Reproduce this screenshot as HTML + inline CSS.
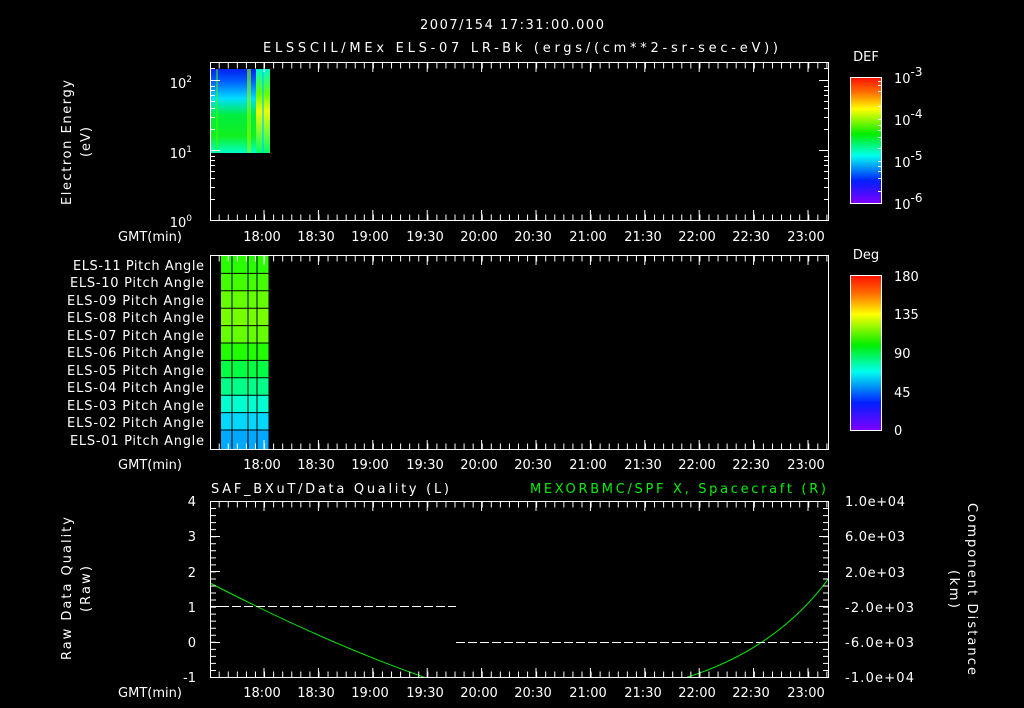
<!DOCTYPE html>
<html><head><meta charset="utf-8"><style>
html,body{margin:0;padding:0;background:#000;width:1024px;height:708px;overflow:hidden}
svg{display:block}
text{font-family:"DejaVu Sans","Liberation Sans",sans-serif;fill:#fff;font-size:13px}
</style></head><body>
<svg width="1024" height="708" viewBox="0 0 1024 708">
<defs>
<linearGradient id="rb" x1="0" y1="0" x2="0" y2="1">
<stop offset="0" stop-color="#ff1000"/><stop offset="0.12" stop-color="#ff7000"/><stop offset="0.25" stop-color="#ffff00"/><stop offset="0.45" stop-color="#00ee00"/><stop offset="0.62" stop-color="#00ffee"/><stop offset="0.82" stop-color="#0020ff"/><stop offset="1" stop-color="#8000ff"/>
</linearGradient>
<linearGradient id="sp" x1="0" y1="0" x2="0" y2="1">
<stop offset="0" stop-color="#0020ee"/><stop offset="0.15" stop-color="#0060ff"/><stop offset="0.35" stop-color="#00ddff"/><stop offset="0.55" stop-color="#00ee40"/><stop offset="0.8" stop-color="#10f020"/><stop offset="1" stop-color="#00ffcc"/>
</linearGradient>
<linearGradient id="sp2" x1="0" y1="0" x2="0" y2="1">
<stop offset="0" stop-color="#00ffcc"/><stop offset="0.3" stop-color="#66ff00"/><stop offset="0.5" stop-color="#eeff00"/><stop offset="1" stop-color="#00ff66"/>
</linearGradient>
<clipPath id="c3"><rect x="210" y="501" width="619" height="177"/></clipPath>
</defs>

<text x="420" y="29" font-size="15" textLength="184" lengthAdjust="spacing">2007/154 17:31:00.000</text>
<text x="263" y="52" font-size="15" textLength="515" lengthAdjust="spacing">ELSSCIL/MEx ELS-07 LR-Bk  (ergs/(cm**2-sr-sec-eV))</text>

<!-- spectrogram -->
<rect x="211" y="69" width="59" height="84" fill="url(#sp)"/>
<rect x="247" y="69" width="4" height="84" fill="#88ff00" opacity="0.6"/>
<rect x="256" y="69" width="14" height="84" fill="url(#sp2)"/>
<rect x="262" y="69" width="2" height="84" fill="#00ccff" opacity="0.6"/>
<rect x="216" y="69" width="2" height="84" fill="#44ff00" opacity="0.5"/>

<!-- panel 1 -->
<rect x="210.5" y="62.5" width="618" height="158" fill="none" stroke="#fff"/>
<line x1="218.7" y1="65.5" x2="829" y2="65.5" stroke="#fff" stroke-width="6" stroke-dasharray="1 8.07"/>
<line x1="218.7" y1="217.5" x2="829" y2="217.5" stroke="#fff" stroke-width="6" stroke-dasharray="1 8.07"/>
<g stroke="#fff">
<path d="M264 62v10M318.4 62v10M372.8 62v10M427.2 62v10M481.6 62v10M536 62v10M590.4 62v10M644.8 62v10M699.2 62v10M753.6 62v10M808 62v10"/>
<path d="M264 220v-10M318.4 220v-10M372.8 220v-10M427.2 220v-10M481.6 220v-10M536 220v-10M590.4 220v-10M644.8 220v-10M699.2 220v-10M753.6 220v-10M808 220v-10"/>
<path d="M210 150.5h10M210 80.5h10M210 199.5h5M210 187.5h5M210 178.5h5M210 171.5h5M210 165.5h5M210 160.5h5M210 156.5h5M210 129.5h5M210 117.5h5M210 108.5h5M210 101.5h5M210 95.5h5M210 90.5h5M210 86.5h5M210 68.5h5"/>
<path d="M829 150.5h-10M829 80.5h-10M829 199.5h-5M829 187.5h-5M829 178.5h-5M829 171.5h-5M829 165.5h-5M829 160.5h-5M829 156.5h-5M829 129.5h-5M829 117.5h-5M829 108.5h-5M829 101.5h-5M829 95.5h-5M829 90.5h-5M829 86.5h-5M829 68.5h-5"/>
</g>
<text x="192" y="88" text-anchor="end" font-size="13">10<tspan dy="-6" font-size="9">2</tspan></text>
<text x="192" y="158" text-anchor="end" font-size="13">10<tspan dy="-6" font-size="9">1</tspan></text>
<text x="192" y="227" text-anchor="end" font-size="13">10<tspan dy="-6" font-size="9">0</tspan></text>
<text transform="translate(71,205) rotate(-90)" font-size="14" textLength="125" lengthAdjust="spacing">Electron Energy</text>
<text transform="translate(90,157) rotate(-90)" font-size="14" textLength="30" lengthAdjust="spacing">(eV)</text>

<!-- DEF colorbar -->
<text x="866" y="61" text-anchor="middle" font-size="16">DEF</text>
<rect x="850.5" y="77.5" width="31" height="126" fill="url(#rb)" stroke="#fff"/>
<g stroke="#fff"><path d="M882 81.5h-4M882 85.5h-4M882 91.5h-4M882 106.5h-4M882 119.5h-4M882 125.5h-4M882 130.5h-4M882 137.5h-4M882 148.5h-4M882 161.5h-4M882 166.5h-4M882 171.5h-4M882 178.5h-4M882 191.5h-4"/></g>
<text x="894" y="83" font-size="17">10<tspan dy="-7" font-size="12">-3</tspan></text>
<text x="894" y="125" font-size="17">10<tspan dy="-7" font-size="12">-4</tspan></text>
<text x="894" y="167" font-size="17">10<tspan dy="-7" font-size="12">-5</tspan></text>
<text x="894" y="209" font-size="17">10<tspan dy="-7" font-size="12">-6</tspan></text>

<!-- time labels -->
<g font-size="13" text-anchor="middle">
<text x="150" y="241">GMT(min)</text><text x="262" y="241">18:00</text><text x="316" y="241">18:30</text><text x="370" y="241">19:00</text><text x="425" y="241">19:30</text><text x="479" y="241">20:00</text><text x="533" y="241">20:30</text><text x="588" y="241">21:00</text><text x="643" y="241">21:30</text><text x="697" y="241">22:00</text><text x="751" y="241">22:30</text><text x="806" y="241">23:00</text>
<text x="150" y="469">GMT(min)</text><text x="262" y="469">18:00</text><text x="316" y="469">18:30</text><text x="370" y="469">19:00</text><text x="425" y="469">19:30</text><text x="479" y="469">20:00</text><text x="533" y="469">20:30</text><text x="588" y="469">21:00</text><text x="643" y="469">21:30</text><text x="697" y="469">22:00</text><text x="751" y="469">22:30</text><text x="806" y="469">23:00</text>
<text x="150" y="697">GMT(min)</text><text x="262" y="697">18:00</text><text x="316" y="697">18:30</text><text x="370" y="697">19:00</text><text x="425" y="697">19:30</text><text x="479" y="697">20:00</text><text x="533" y="697">20:30</text><text x="588" y="697">21:00</text><text x="643" y="697">21:30</text><text x="697" y="697">22:00</text><text x="751" y="697">22:30</text><text x="806" y="697">23:00</text>
</g>

<!-- panel 2 pitch angle cells -->
<g>
<rect x="221" y="256" width="48" height="17.4" fill="#2aff00"/>
<rect x="221" y="273.4" width="48" height="17.4" fill="#44ff00"/>
<rect x="221" y="290.8" width="48" height="17.4" fill="#66ff00"/>
<rect x="221" y="308.2" width="48" height="17.4" fill="#77ff00"/>
<rect x="221" y="325.6" width="48" height="17.4" fill="#66ff00"/>
<rect x="221" y="343" width="48" height="17.4" fill="#22ff00"/>
<rect x="221" y="360.4" width="48" height="17.4" fill="#00ff44"/>
<rect x="221" y="377.8" width="48" height="17.4" fill="#00ff88"/>
<rect x="221" y="395.2" width="48" height="17.4" fill="#00ffd0"/>
<rect x="221" y="412.6" width="48" height="17.4" fill="#00d8ff"/>
<rect x="221" y="430" width="48" height="19" fill="#00a8ff"/>
</g>
<g stroke="#000" stroke-width="1">
<path d="M232 256v193M248 256v193M257 256v193M269 256v193"/>
<path d="M221 273.4h48M221 290.8h48M221 308.2h48M221 325.6h48M221 343h48M221 360.4h48M221 377.8h48M221 395.2h48M221 412.6h48M221 430h48"/>
</g>
<rect x="210.5" y="255.5" width="618" height="194" fill="none" stroke="#fff"/>
<line x1="218.7" y1="258.5" x2="829" y2="258.5" stroke="#fff" stroke-width="6" stroke-dasharray="1 8.07"/>
<line x1="218.7" y1="446.5" x2="829" y2="446.5" stroke="#fff" stroke-width="6" stroke-dasharray="1 8.07"/>
<g stroke="#fff">
<path d="M264 255v10M318.4 255v10M372.8 255v10M427.2 255v10M481.6 255v10M536 255v10M590.4 255v10M644.8 255v10M699.2 255v10M753.6 255v10M808 255v10"/>
<path d="M264 450v-10M318.4 450v-10M372.8 450v-10M427.2 450v-10M481.6 450v-10M536 450v-10M590.4 450v-10M644.8 450v-10M699.2 450v-10M753.6 450v-10M808 450v-10"/>
</g>
<g font-size="12">
<text x="73" y="270" textLength="131" lengthAdjust="spacing">ELS-11 Pitch Angle</text>
<text x="70" y="287" textLength="134" lengthAdjust="spacing">ELS-10 Pitch Angle</text>
<text x="67" y="305" textLength="137" lengthAdjust="spacing">ELS-09 Pitch Angle</text>
<text x="67" y="322" textLength="137" lengthAdjust="spacing">ELS-08 Pitch Angle</text>
<text x="67" y="340" textLength="137" lengthAdjust="spacing">ELS-07 Pitch Angle</text>
<text x="67" y="357" textLength="137" lengthAdjust="spacing">ELS-06 Pitch Angle</text>
<text x="67" y="375" textLength="137" lengthAdjust="spacing">ELS-05 Pitch Angle</text>
<text x="67" y="392" textLength="137" lengthAdjust="spacing">ELS-04 Pitch Angle</text>
<text x="67" y="410" textLength="137" lengthAdjust="spacing">ELS-03 Pitch Angle</text>
<text x="67" y="427" textLength="137" lengthAdjust="spacing">ELS-02 Pitch Angle</text>
<text x="70" y="445" textLength="134" lengthAdjust="spacing">ELS-01 Pitch Angle</text>
</g>
<!-- Deg colorbar -->
<text x="866" y="259" text-anchor="middle" font-size="16">Deg</text>
<rect x="850.5" y="275.5" width="31" height="155" fill="url(#rb)" stroke="#fff"/>
<g font-size="16"><text x="894" y="281">180</text><text x="894" y="319">135</text><text x="894" y="358">90</text><text x="894" y="397">45</text><text x="894" y="435">0</text></g>

<!-- panel 3 -->
<text x="211" y="493" font-size="15" textLength="238" lengthAdjust="spacing">SAF_BXuT/Data Quality (L)</text>
<text x="530" y="493" font-size="15" style="fill:#00ee00" textLength="296" lengthAdjust="spacing">MEXORBMC/SPF X, Spacecraft (R)</text>
<g clip-path="url(#c3)" fill="none" stroke="#00ee00">
<path d="M210 583 Q330 645 432 680"/>
<path d="M678 680 Q775 652 829 578"/>
</g>
<line x1="220" y1="606.5" x2="456" y2="606.5" stroke="#fff" stroke-dasharray="9 3"/>
<line x1="456" y1="642.5" x2="818" y2="642.5" stroke="#fff" stroke-dasharray="9 3"/>
<rect x="210.5" y="501.5" width="618" height="176" fill="none" stroke="#fff"/>
<line x1="218.7" y1="504.5" x2="829" y2="504.5" stroke="#fff" stroke-width="6" stroke-dasharray="1 8.07"/>
<line x1="218.7" y1="674.5" x2="829" y2="674.5" stroke="#fff" stroke-width="6" stroke-dasharray="1 8.07"/>
<line x1="213" y1="501" x2="213" y2="678" stroke="#fff" stroke-width="6" stroke-dasharray="1 6.04"/>
<line x1="826" y1="501" x2="826" y2="678" stroke="#fff" stroke-width="6" stroke-dasharray="1 6.04"/>
<g stroke="#fff">
<path d="M264 501v10M318.4 501v10M372.8 501v10M427.2 501v10M481.6 501v10M536 501v10M590.4 501v10M644.8 501v10M699.2 501v10M753.6 501v10M808 501v10"/>
<path d="M264 678v-10M318.4 678v-10M372.8 678v-10M427.2 678v-10M481.6 678v-10M536 678v-10M590.4 678v-10M644.8 678v-10M699.2 678v-10M753.6 678v-10M808 678v-10"/>
<path d="M210 536.5h10M210 571.5h10M210 606.5h10M210 642.5h10M829 536.5h-10M829 571.5h-10M829 606.5h-10M829 642.5h-10"/>
</g>
<g font-size="13" text-anchor="end">
<text x="196" y="506">4</text><text x="196" y="541">3</text><text x="196" y="577">2</text><text x="196" y="612">1</text><text x="196" y="647">0</text><text x="196" y="682">-1</text>
</g>
<g font-size="12">
<text x="845" y="506" textLength="60" lengthAdjust="spacing">1.0e+04</text>
<text x="845" y="541" textLength="60" lengthAdjust="spacing">6.0e+03</text>
<text x="845" y="577" textLength="60" lengthAdjust="spacing">2.0e+03</text>
<text x="845" y="612" textLength="69" lengthAdjust="spacing">-2.0e+03</text>
<text x="845" y="647" textLength="69" lengthAdjust="spacing">-6.0e+03</text>
<text x="845" y="682" textLength="69" lengthAdjust="spacing">-1.0e+04</text>
</g>
<text transform="translate(71,660) rotate(-90)" font-size="14" textLength="143" lengthAdjust="spacing">Raw Data Quality</text>
<text transform="translate(90,612) rotate(-90)" font-size="14" textLength="46" lengthAdjust="spacing">(Raw)</text>
<text transform="translate(968,503) rotate(90)" font-size="14" textLength="172" lengthAdjust="spacing">Component Distance</text>
<text transform="translate(950,570) rotate(90)" font-size="14" textLength="38" lengthAdjust="spacing">(km)</text>
</svg>
</body></html>
